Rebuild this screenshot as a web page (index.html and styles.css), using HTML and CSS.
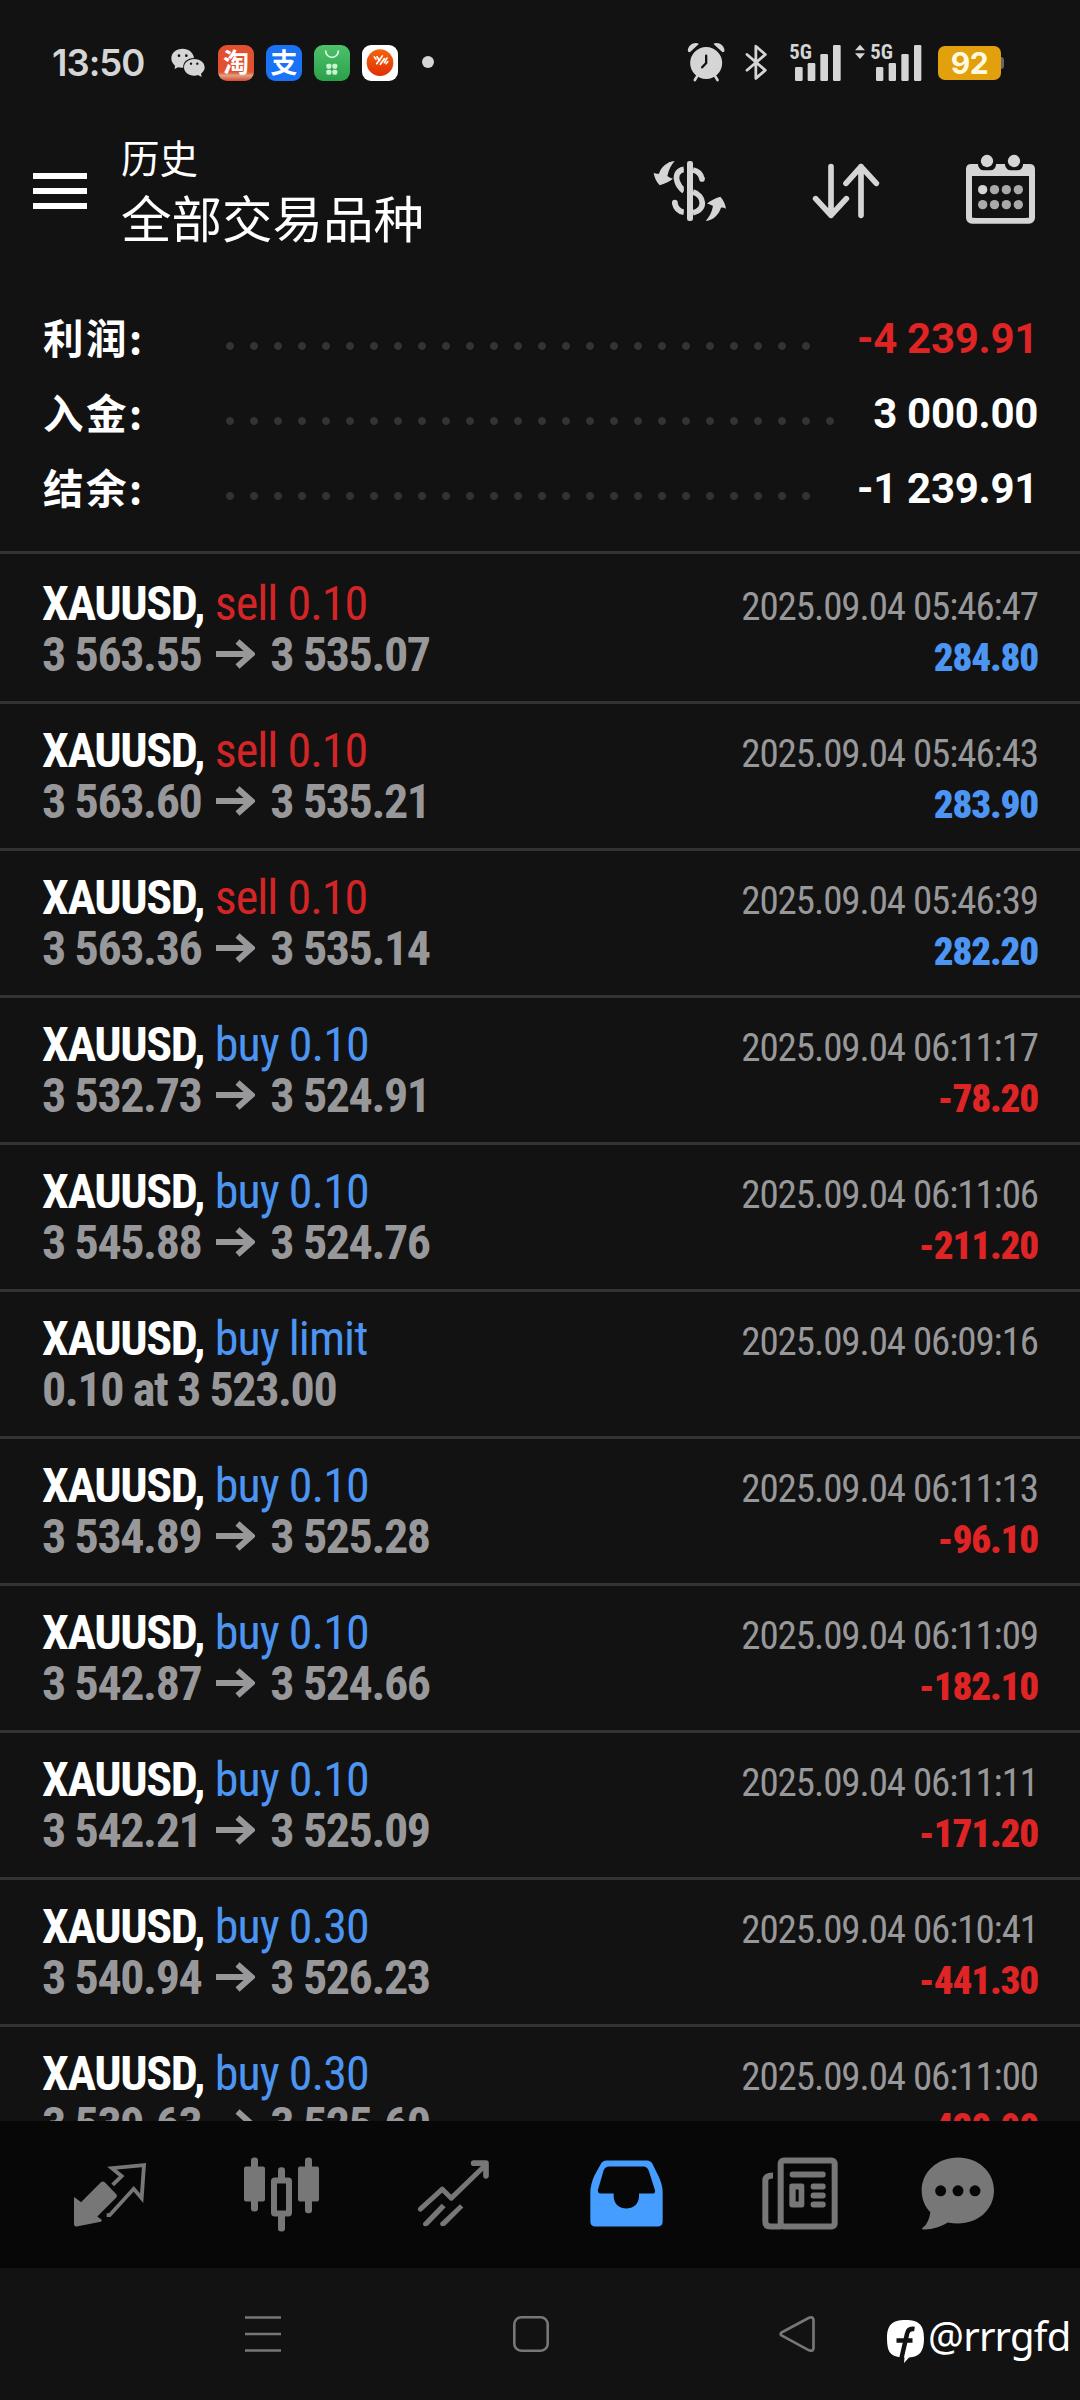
FILE: index.html
```html
<!DOCTYPE html>
<html lang="zh-CN">
<head>
<meta charset="utf-8">
<title>历史</title>
<link rel="stylesheet" href="styles.css">
</head>
<body>
<div class="status">
  <span class="clock">13:50</span>
  <svg class="wechat" viewBox="33 42 102 90"><path d="M68 44c-19 0-34 12-34 29 0 9 4 16 11 22l-1 10 10-5c5 1 10 2 16 1-2-16 12-29 32-29C100 55 86 44 68 44z"/><path d="M103 75c-18 0-31 11-31 25s13 25 31 25c4 0 8-1 11-2l11 6-2-10c7-5 11-11 11-19 0-14-13-25-31-25z"/><g fill="#121212"><circle cx="57" cy="65" r="4"/><circle cx="79" cy="65" r="4"/><circle cx="93" cy="89" r="3.5"/><circle cx="112" cy="89" r="3.5"/></g></svg>
  <span class="tile taobao">淘</span>
  <span class="tile alipay">支</span>
  <span class="tile"><svg viewBox="0 0 108 108"><defs><linearGradient id="gr" x2="0" y2="1"><stop stop-color="#4dc26b"/><stop offset="1" stop-color="#2ba04a"/></linearGradient></defs><rect width="108" height="108" fill="url(#gr)"/><path d="M35 18a19 19 0 0 0 38 0" fill="none" stroke="#dff8e2" stroke-width="5" stroke-linecap="round"/><g fill="#c9f3d0"><rect x="37" y="56" width="15" height="15" rx="5"/><rect x="55" y="56" width="15" height="15" rx="5"/><rect x="37" y="74" width="15" height="15" rx="5"/><rect x="55" y="74" width="15" height="15" rx="5"/></g></svg></span>
  <span class="tile"><svg viewBox="0 0 108 108"><defs><linearGradient id="or" x2="0" y2="1"><stop stop-color="#f5650c"/><stop offset="1" stop-color="#e02f05"/></linearGradient></defs><rect width="108" height="108" fill="#fff"/><circle cx="54" cy="53" r="40" fill="url(#or)"/><path d="M37 36l5 7M45 35l8 12M44 56l17-23M55 58l12-17M67 53l8-14M72 56l5-6" stroke="#fff" stroke-width="5" stroke-linecap="round"/></svg></span>
  <i class="more-dot"></i>
  <div class="status-right">
    <svg class="alarm" viewBox="22 24 116 120"><circle cx="79" cy="87" r="48"/><path d="M24 50c0-13 12-23 24-23 4 0 7 1 9 3L30 55c-4-1-6-3-6-5zM134 50c0-13-12-23-24-23-4 0-7 1-9 3l27 25c4-1 6-3 6-5z"/><path d="M53 125l-8 13M105 125l8 13" stroke="#d5d5d5" stroke-width="8" stroke-linecap="round"/><path d="M79 65v22l-12 13" fill="none" stroke="#121212" stroke-width="7" stroke-linecap="round"/></svg>
    <svg class="bt" viewBox="198 26 70 114"><path d="M204 60l56 48-29 25V35l29 25-56 48" fill="none" stroke="#d5d5d5" stroke-width="8.5" stroke-linejoin="round" stroke-linecap="round"/></svg>
    <svg class="sig1" viewBox="324 24 159 117"><text x="328" y="73" textLength="68" lengthAdjust="spacingAndGlyphs">5G</text><rect x="345" y="96" width="23" height="42" rx="4"/><rect x="383" y="84" width="23" height="54" rx="4"/><rect x="421" y="57" width="23" height="81" rx="4"/><rect x="459" y="30" width="23" height="108" rx="4"/></svg>
    <svg class="sig2" viewBox="522 24 204 117"><path d="M540 29l15 17h-30zM540 72l15-17h-30z"/><text x="571" y="73" textLength="68" lengthAdjust="spacingAndGlyphs">5G</text><rect x="588" y="96" width="22" height="42" rx="4"/><rect x="626" y="84" width="22" height="54" rx="4"/><rect x="664" y="57" width="22" height="81" rx="4"/><rect x="702" y="30" width="22" height="108" rx="4"/></svg>
    <span class="battery">92</span><i class="nub"></i>
  </div>
</div>

<header class="header">
  <div class="menu"><i></i><i></i><i></i></div>
  <div class="titles"><div class="sub">历史</div><div class="main">全部交易品种</div></div>
  <svg class="currency" viewBox="36 57 228 192"><path d="M41 98c5 2 10 4 16 3C63 82 80 65 104 63 93 75 86 90 82 108c6 5 11 7 17 8-10 8-25 15-40 20C49 125 43 112 41 98zM258 206c-5-2-10-4-15-3-6 19-22 38-46 40 11-12 19-27 22-45-6-4-12-6-18-7 10-10 24-16 40-21 10 11 15 22 17 36z"/><path d="M132 88c-22 4-26 22-20 38 4 12 10 19 20 27M104 188c3 17 14 26 28 29M159 90c15 3 24 12 27 27M159 156c34 10 40 54 0 62" fill="none" stroke="#d5d5d5" stroke-width="17"/><circle cx="186" cy="117" r="8.500"/><circle cx="104.500" cy="188" r="8.500"/><path d="M132 76v152" stroke="#121212" stroke-width="1"/><rect x="132" y="60" width="9" height="186" fill="#121212"/><rect x="141" y="63" width="18" height="180" rx="7"/></svg>
  <svg class="sort" viewBox="516 69 204 168"><path d="M573 80v146M527 176l46 50 46-50M663 226V80M618 130l45-50 46 50" fill="none" stroke="#d5d5d5" stroke-width="17" stroke-linecap="round" stroke-linejoin="round"/></svg>
  <svg class="calendar" viewBox="975 42 213 213"><rect x="987" y="90" width="189" height="152.500" rx="9" fill="none" stroke="#d5d5d5" stroke-width="18"/><path d="M978 88q0-16 16-16h174q17 0 17 16v20H978z"/><path d="M996 124q0-16 16-16h139q16 0 16 16v94q0 16-16 16h-139q-16 0-16-16z" fill="#121212"/><path d="M1014 68v8q4 15 17 15h20q14 0 17-15v-8zM1095 68v8q4 15 17 15h20q14 0 17-15v-8z" fill="#121212"/><circle cx="1041" cy="63" r="18.500"/><circle cx="1122" cy="63" r="18.500"/><circle cx="1028" cy="149" r="14"/><g fill="#a9a9a9"><circle cx="1063.500" cy="149" r="14"/><circle cx="1099" cy="149" r="14"/><circle cx="1135" cy="149" r="14"/><circle cx="1028" cy="194" r="14"/><circle cx="1063.500" cy="194" r="14"/><circle cx="1099" cy="194" r="14"/><circle cx="1135" cy="194" r="14"/></g></svg>
</header>

<section class="summary">
  <div class="total"><span class="label">利润:</span><i class="dots"></i><b class="neg">-4 239.91</b></div>
  <div class="total"><span class="label">入金:</span><i class="dots wide"></i><b>3 000.00</b></div>
  <div class="total"><span class="label">结余:</span><i class="dots"></i><b>-1 239.91</b></div>
</section>

<svg width="0" height="0" class="defs"><symbol id="arrow" viewBox="0 0 39 30"><path d="M0 15h35M21.500 2.500L35.500 15 21.500 27.500" fill="none" stroke="#98989a" stroke-width="6"/></symbol></svg>
<main class="deals">
  <div class="deal"><div class="sym">XAUUSD, <span class="sell">sell 0.10</span></div><time>2025.09.04 05:46:47</time><div class="price">3 563.55<svg><use href="#arrow"/></svg>3 535.07</div><b class="pos">284.80</b></div>
  <div class="deal"><div class="sym">XAUUSD, <span class="sell">sell 0.10</span></div><time>2025.09.04 05:46:43</time><div class="price">3 563.60<svg><use href="#arrow"/></svg>3 535.21</div><b class="pos">283.90</b></div>
  <div class="deal"><div class="sym">XAUUSD, <span class="sell">sell 0.10</span></div><time>2025.09.04 05:46:39</time><div class="price">3 563.36<svg><use href="#arrow"/></svg>3 535.14</div><b class="pos">282.20</b></div>
  <div class="deal"><div class="sym">XAUUSD, <span class="buy">buy 0.10</span></div><time>2025.09.04 06:11:17</time><div class="price">3 532.73<svg><use href="#arrow"/></svg>3 524.91</div><b class="neg">-78.20</b></div>
  <div class="deal"><div class="sym">XAUUSD, <span class="buy">buy 0.10</span></div><time>2025.09.04 06:11:06</time><div class="price">3 545.88<svg><use href="#arrow"/></svg>3 524.76</div><b class="neg">-211.20</b></div>
  <div class="deal"><div class="sym">XAUUSD, <span class="buy">buy limit</span></div><time>2025.09.04 06:09:16</time><div class="price">0.10 at 3 523.00</div></div>
  <div class="deal"><div class="sym">XAUUSD, <span class="buy">buy 0.10</span></div><time>2025.09.04 06:11:13</time><div class="price">3 534.89<svg><use href="#arrow"/></svg>3 525.28</div><b class="neg">-96.10</b></div>
  <div class="deal"><div class="sym">XAUUSD, <span class="buy">buy 0.10</span></div><time>2025.09.04 06:11:09</time><div class="price">3 542.87<svg><use href="#arrow"/></svg>3 524.66</div><b class="neg">-182.10</b></div>
  <div class="deal"><div class="sym">XAUUSD, <span class="buy">buy 0.10</span></div><time>2025.09.04 06:11:11</time><div class="price">3 542.21<svg><use href="#arrow"/></svg>3 525.09</div><b class="neg">-171.20</b></div>
  <div class="deal"><div class="sym">XAUUSD, <span class="buy">buy 0.30</span></div><time>2025.09.04 06:10:41</time><div class="price">3 540.94<svg><use href="#arrow"/></svg>3 526.23</div><b class="neg">-441.30</b></div>
  <div class="deal"><div class="sym">XAUUSD, <span class="buy">buy 0.30</span></div><time>2025.09.04 06:11:00</time><div class="price">3 539.63<svg><use href="#arrow"/></svg>3 525.60</div><b class="neg">-420.90</b></div>
</main>

<nav class="tabs">
  <svg viewBox="30 43.500 240 240"><path d="M42 172q1-3 4 0l17 13 59-59q7-6 13 0l34 35q4 5 0 10l-57 57 13 10q2 5-3 6l-72 14q-8 1-8-7z"/><path d="M158 133l27-26-29-24 96-9-7 99-24-28-72 79h-9" fill="none" stroke="#777" stroke-width="11.500" stroke-linejoin="miter"/></svg>
  <svg viewBox="546 43.500 240 240"><g><rect x="552" y="78" width="63" height="105" rx="6"/><rect x="573" y="51" width="21" height="162" rx="9"/><rect x="714" y="78" width="63" height="105" rx="6"/><rect x="735" y="51" width="21" height="167" rx="9"/><rect x="654" y="80" width="21" height="60" rx="9"/><rect x="654" y="215" width="21" height="58" rx="9"/></g><rect x="642" y="120" width="45" height="99" rx="2" fill="#070707" stroke="#777" stroke-width="18"/></svg>
  <svg viewBox="1062 43.500 240 240"><g fill="none" stroke="#777" stroke-width="15" stroke-linecap="round" stroke-linejoin="round"><path d="M1081 206l66-60 27 27 101-98"/><path d="M1241 68h37v38" stroke-width="17"/></g><path d="M1090 247l55-57 12 10-53 55q-9 5-14 0-2-4 0-8zM1141 247l59-56 10 10-54 54q-9 5-14 0-3-4-1-8z"/></svg>
  <svg viewBox="18 43.500 240 240"><path fill="#449dff" fill-rule="evenodd" d="M80 60h121q11 0 17 11l17 35q13 27 13 50v86q0 16-16 16H47q-16 0-16-16v-86q0-23 12-50l19-35q6-11 18-11zM88 78q-12 0-17 11l-17 59q-2 11 8 11h39v8c0 49 76 49 76 0v-8h40q10 0 8-10l-19-59q-5-12-16-12z"/></svg>
  <svg viewBox="534 43.500 240 240"><g fill="none" stroke="#777" stroke-width="18"><rect x="602" y="60" width="162" height="198" rx="9"/><path d="M604 258h-33q-15 0-15-15V120q0-15 23-15"/></g><rect x="629" y="93" width="108" height="18" rx="8"/><path fill-rule="evenodd" d="M636 129h30q7 0 7 7v57q0 8-7 8h-30q-8 0-8-8v-57q0-7 8-7zM647 147v36h9v-36z"/><rect x="692" y="129" width="45" height="18" rx="8"/><rect x="692" y="156" width="45" height="18" rx="8"/><rect x="692" y="183" width="45" height="18" rx="8"/></svg>
  <svg class="chat" viewBox="1008 43.500 240 240"><path d="M1134 51c60 0 108 42 108 99s-48 99-108 99q-16 0-31-3c-20 12-47 22-72 21q-9-1-2-6 18-14 22-46c-16-16-26-39-26-65 0-57 49-99 109-99z"/><g fill="#070707"><circle cx="1082" cy="151" r="16.500"/><circle cx="1134" cy="151" r="16.500"/><circle cx="1185" cy="151" r="16.500"/></g></svg>
</nav>

<footer class="sysbar">
  <svg class="recent" viewBox="0 0 36 36"><path d="M0 1.500h36M0 18h36M0 34.500h36"/></svg>
  <svg class="home" viewBox="0 0 36 36"><rect x="1.300" y="1.300" width="33.400" height="33.400" rx="7"/></svg>
  <svg class="back" viewBox="0 0 36 36"><path d="M2.500 16.500L30 1.800q4-1.500 4.500 2v28.500q-.5 3.500-4.500 2L2.500 19.500q-2-1.500 0-3z"/></svg>
  <div class="mark"><svg viewBox="0 0 37 43"><path d="M18.500 0C32 0 37 5 37 18.500S32 37 22 37.500L17 43l.5-5.500-6-.5C3 35.500 0 31 0 18.500 0 5 5 0 18.500 0z" fill="#fff"/><path d="M27.500 9q-6.500-1-7.500 5L14.500 38M9.500 20.500h16" fill="none" stroke="#121212" stroke-width="4.500"/></svg><span>@rrrgfd</span></div>
</footer>
</body>
</html>
```
FILE: styles.css
```css
* { box-sizing: border-box; }
body {
  margin: 0;
  width: 1080px;
  height: 2400px;
  overflow: hidden;
  background: #121212;
  color: #fff;
  font-family: Roboto, "Noto Sans CJK SC", sans-serif;
}
svg { display: block; fill: #d5d5d5; flex: none; }
i { font-style: normal; }
.defs { position: absolute; }

.status { height: 126px; padding: 0 76px 0 52px; display: flex; align-items: center; }
.clock {
  width: 119px;
  font: 600 36.500px/40px Inter, sans-serif;
  letter-spacing: -1px;
  color: #d5d5d5;
}
.wechat { width: 34px; height: 30px; }
.tile {
  width: 36px; height: 36px;
  margin-left: 12px;
  border-radius: 9px;
  overflow: hidden;
  flex: none;
  text-align: center;
  font: 700 27px/34px "Noto Sans CJK SC", sans-serif;
}
.tile svg { width: 36px; height: 36px; }
.taobao { margin-left: 13px; font-size: 26px; line-height: 31px; background: linear-gradient(#e2512f 0 75%, #dfa184 85%, #d7472e); }
.alipay { background: #1a72f5; }
.more-dot { width: 12px; height: 12px; margin-left: 24px; border-radius: 50%; background: #d5d5d5; position: relative; top: -1px; }
.status-right { margin-left: auto; display: flex; align-items: center; height: 38px; position: relative; top: -1px; }
.alarm { width: 39px; height: 40px; }
.bt { width: 23px; height: 38px; margin-left: 19px; }
.sig1 { width: 53px; height: 39px; margin-left: 20px; }
.sig2 { width: 68px; height: 39px; margin-left: 13px; }
.status text { font: 700 62px Roboto, sans-serif; font-stretch: 75%; }
.battery {
  width: 63px; height: 34px;
  margin-left: 16px;
  border-radius: 7px;
  background: #e2a10c;
  color: #fff9df;
  text-align: center;
  font: 700 30px/35px Inter, sans-serif;
  letter-spacing: -0.5px;
  position: relative; top: 1px;
}
.nub { width: 3px; height: 12px; border-radius: 0 3px 3px 0; background: #666; margin-top: 2px; }

.header { height: 130px; padding: 0 44px 0 33px; display: flex; align-items: center; }
.menu { width: 54px; display: grid; gap: 9px; }
.menu i { height: 6px; background: #fff; }
.titles { align-self: flex-start; margin-left: 34px; margin-right: auto; font-family: "Noto Sans CJK SC", sans-serif; font-weight: 400; }
.sub { font-size: 38.500px; line-height: 60px; }
.main { font-size: 50.500px; line-height: 61px; }
.currency { width: 76px; height: 64px; }
.sort { width: 68px; height: 56px; margin-left: 84px; }
.calendar { width: 71px; height: 71px; margin-left: 85px; margin-bottom: 3px; }

.summary { height: 295px; padding: 45px 42px 0 42px; }
.total { height: 75px; display: flex; align-items: center; font-size: 42px; }
.label { width: 184px; padding: 0 0 4px 1px; font: 700 40.500px/60px "Noto Sans CJK SC", sans-serif; letter-spacing: 2.500px; }
.dots {
  width: 600px; height: 8px;
  margin-top: 14px;
  background: radial-gradient(circle at 4px 4px, #333 3.500px, transparent 4.300px) 0 0 / 24px 8px repeat-x;
}
.dots.wide { width: 624px; }
.total b { margin-left: auto; white-space: nowrap; letter-spacing: -0.300px; }

.neg { color: #de2424; }
.pos, .buy { color: #4c95f3; }
.sell { color: #d42526; }

.deals { height: 1570px; overflow: hidden; }
.deal {
  height: 147px;
  padding: 21px 42px 0;
  border-top: 3px solid #333;
  display: grid;
  grid-template: 51px 51px / 1fr auto;
  align-items: baseline;
  font-size: 48px;
  line-height: 51px;
  font-stretch: 75%;
  font-weight: 700;
  letter-spacing: -1.400px;
  white-space: nowrap;
}
.deal:first-child { height: 150px; padding-top: 24px; }
.sym span { font-weight: 400; letter-spacing: -0.950px; margin-left: 1px; }
.price { color: #98989a; }
.price svg { display: inline-block; width: 39px; height: 30px; margin: 0 15px 0 15px; vertical-align: 2px; }
.deal time { font-size: 39px; font-weight: 400; color: #98989a; letter-spacing: -1.080px; }
.deal b { font-size: 39px; justify-self: end; letter-spacing: -1.200px; }

.tabs { height: 147px; padding-left: 70px; background: #070707; display: flex; align-items: center; gap: 92px; }
.tabs svg { width: 80px; height: 80px; fill: #777; }
.tabs .chat { margin-left: -14px; }

.sysbar { height: 132px; padding-left: 245px; display: flex; align-items: center; }
.sysbar > svg { width: 36px; height: 36px; fill: none; stroke: #777; stroke-width: 2.600px; }
.home { margin-left: 232px; }
.back { margin-left: 230px; }
.mark { margin-left: 72px; display: flex; align-items: center; font: 400 40px/50px "Noto Sans", sans-serif; letter-spacing: -0.800px; }
.mark span { padding-top: 4px; }
.mark svg { width: 37px; height: 43px; margin: 14px 4px 0 0; }
```
